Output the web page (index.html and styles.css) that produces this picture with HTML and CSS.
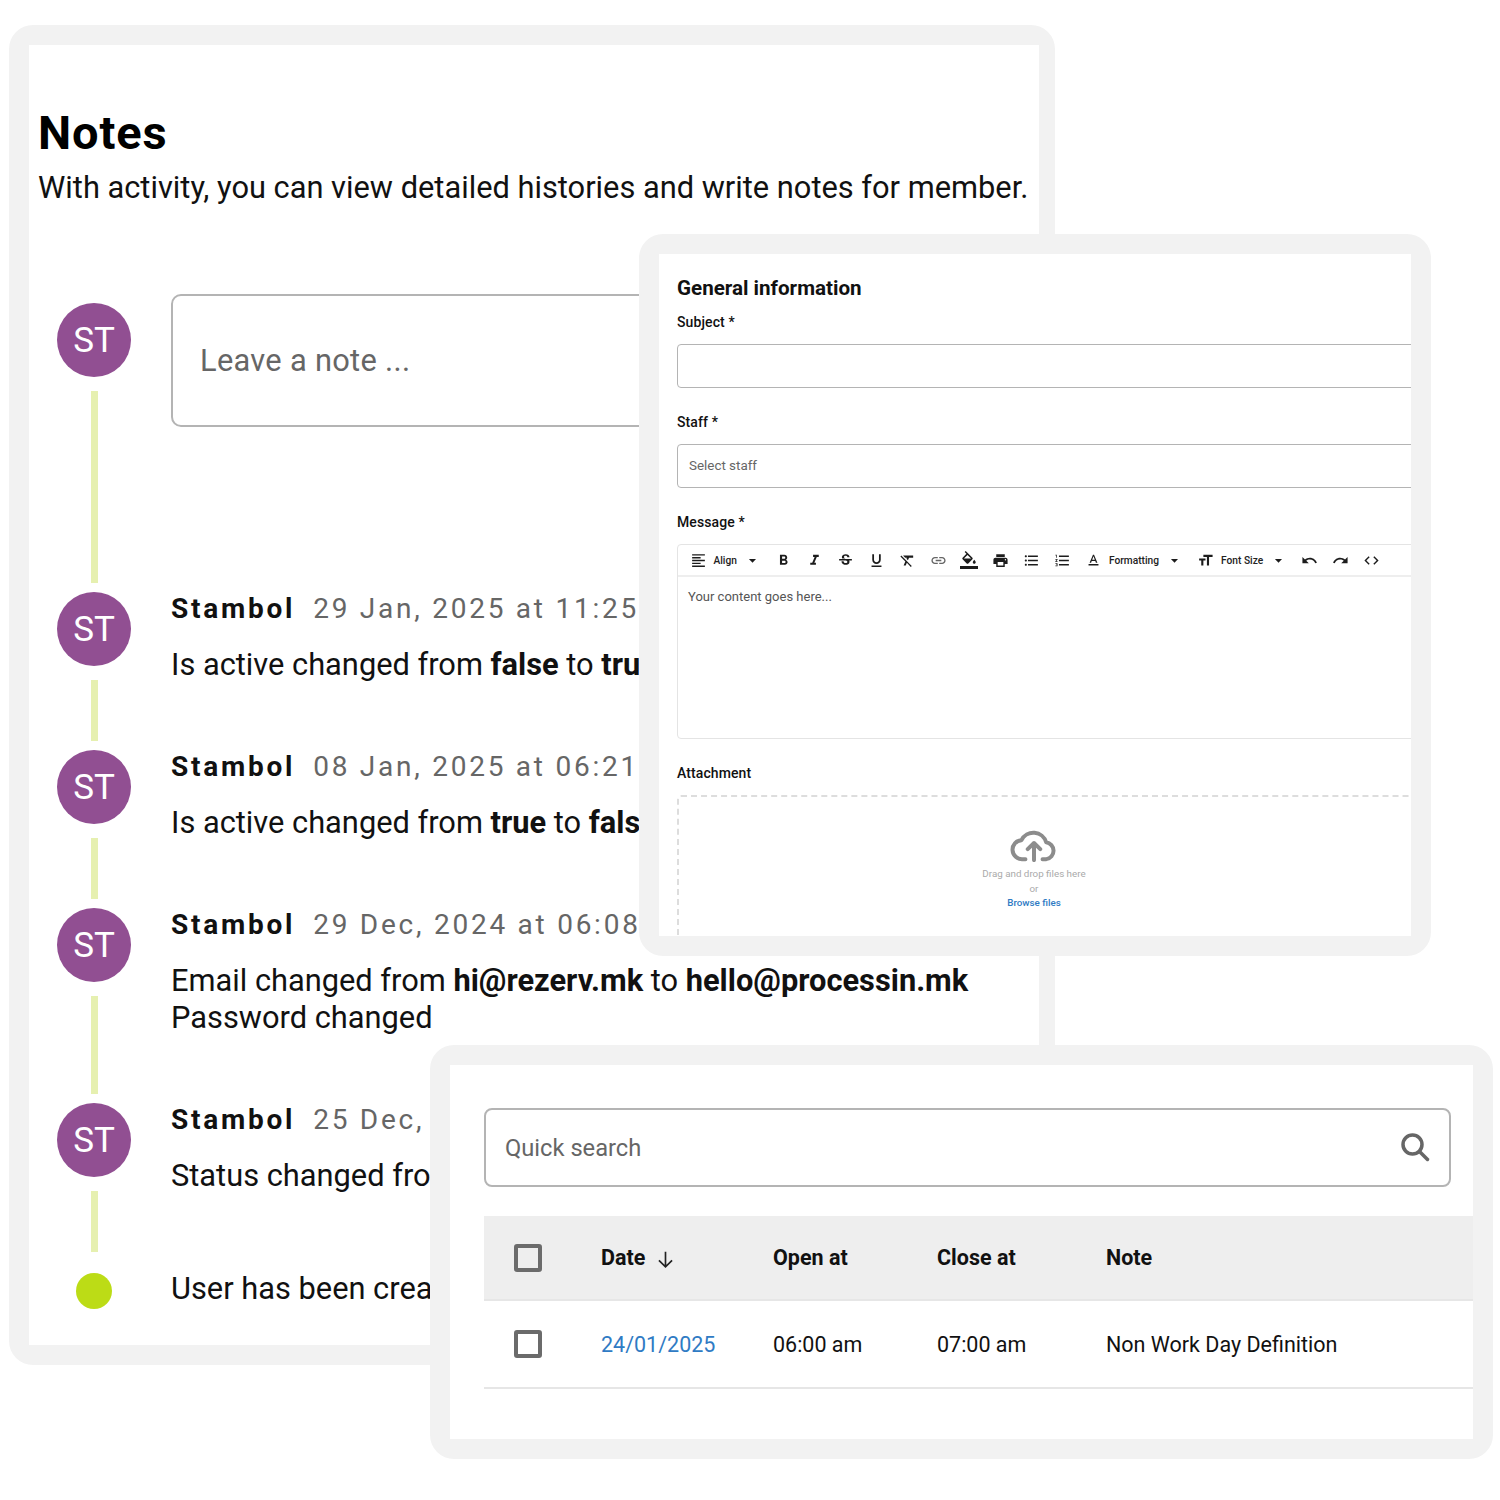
FILE: index.html
```html
<!DOCTYPE html>
<html lang="en">
<head>
  <meta charset="UTF-8" />
  <title>Notes</title>
  <link rel="stylesheet" href="styles.css">
</head>
<body>
  <!-- Notes window -->
  <section class="window window-notes">
    <div class="window-inner notes-inner">
      <h1>Notes</h1>
      <p class="lead">With activity, you can view detailed histories and write notes for member.</p>

      <div class="timeline">
        <div class="entry">
          <div class="rail">
            <div class="avatar">ST</div>
            <div class="line line-tall"></div>
          </div>
          <div class="note-box">Leave a note ...</div>
        </div>

        <div class="entry">
          <div class="rail">
            <div class="avatar">ST</div>
            <div class="line"></div>
          </div>
          <div class="entry-text">
            <div class="meta"><b>Stambol</b><span>29 Jan, 2025 at 11:25</span></div>
            <p class="body">Is active changed from <b>false</b> to <b>true</b></p>
          </div>
        </div>

        <div class="entry">
          <div class="rail">
            <div class="avatar">ST</div>
            <div class="line"></div>
          </div>
          <div class="entry-text">
            <div class="meta"><b>Stambol</b><span>08 Jan, 2025 at 06:21</span></div>
            <p class="body">Is active changed from <b>true</b> to <b>false</b></p>
          </div>
        </div>

        <div class="entry">
          <div class="rail">
            <div class="avatar">ST</div>
            <div class="line line-mid"></div>
          </div>
          <div class="entry-text">
            <div class="meta"><b>Stambol</b><span>29 Dec, 2024 at 06:08</span></div>
            <p class="body">Email changed from <b>hi@rezerv.mk</b> to <b>hello@processin.mk</b><br>Password changed</p>
          </div>
        </div>

        <div class="entry">
          <div class="rail">
            <div class="avatar">ST</div>
            <div class="line"></div>
          </div>
          <div class="entry-text">
            <div class="meta"><b>Stambol</b><span>25 Dec,</span></div>
            <p class="body">Status changed from</p>
          </div>
        </div>

        <div class="entry entry-end">
          <div class="rail"><div class="dot"></div></div>
          <p class="body end-text">User has been created</p>
        </div>
      </div>
    </div>
  </section>

  <!-- Form window -->
  <section class="window window-form">
    <div class="window-inner form-inner">
      <h2>General information</h2>
      <label class="field-label first">Subject *</label>
      <div class="field"></div>
      <label class="field-label">Staff *</label>
      <div class="field">Select staff</div>
      <label class="field-label">Message *</label>

      <div class="editor">
        <div class="toolbar">
          <span class="tool"><svg viewBox="0 0 24 24"><path d="M3 3h18v2H3zM3 7h12v2H3zM3 11h18v2H3zM3 15h12v2H3zM3 19h18v2H3z"/></svg></span>
          <span class="tool-label">Align</span>
          <span class="tool"><svg viewBox="0 0 24 24"><path d="M7 10l5 5 5-5z"/></svg></span>
          <span class="tool"><svg viewBox="0 0 24 24"><path d="M15.6 10.79c.97-.67 1.65-1.77 1.65-2.79 0-2.26-1.75-4-4-4H7v14h7.04c2.09 0 3.71-1.7 3.71-3.79 0-1.52-.86-2.82-2.15-3.42zM10 6.5h3c.83 0 1.5.67 1.5 1.5s-.67 1.5-1.5 1.5h-3v-3zm3.5 9H10v-3h3.5c.83 0 1.5.67 1.5 1.5s-.67 1.5-1.5 1.5z"/></svg></span>
          <span class="tool"><svg viewBox="0 0 24 24"><path d="M10 4v3h2.21l-3.42 8H6v3h8v-3h-2.21l3.42-8H18V4z"/></svg></span>
          <span class="tool"><svg viewBox="0 0 24 24"><path d="M6.85 7.08C6.85 4.37 9.45 3 12.24 3c1.64 0 3 .49 3.9 1.28.77.65 1.46 1.73 1.46 3.24h-3.01c0-.31-.05-.59-.15-.85-.29-.86-1.2-1.28-2.25-1.28-1.86 0-2.34 1.02-2.34 1.7 0 .48.25.88.74 1.21.38.25.77.48 1.41.7H7.39c-.21-.34-.54-.89-.54-1.92zM21 12v-2H3v2h9.62c1.15.45 1.96.75 1.96 1.97 0 1-.81 1.67-2.28 1.67-1.54 0-2.93-.54-2.93-2.51H6.4c0 .55.08 1.13.24 1.58.81 2.29 3.29 3.3 5.67 3.3 2.27 0 5.3-.89 5.3-4.05 0-.3-.01-1.16-.48-1.94H21V12z"/></svg></span>
          <span class="tool"><svg viewBox="0 0 24 24"><path d="M12 17c3.31 0 6-2.69 6-6V3h-2.5v8c0 1.93-1.57 3.5-3.5 3.5S8.5 12.93 8.5 11V3H6v8c0 3.31 2.69 6 6 6zm-7 2v2h14v-2H5z"/></svg></span>
          <span class="tool"><svg viewBox="0 0 24 24"><path d="M3.27 5L2 6.27l6.97 6.97L6.5 19h3l1.57-3.66L16.73 21 18 19.73 3.55 5.27 3.27 5zM6 5v.18L8.82 8h2.4l-.72 1.68 2.1 2.1L14.21 8H20V5H6z"/></svg></span>
          <span class="tool"><svg viewBox="0 0 24 24" class="soft"><path d="M3.9 12c0-1.71 1.39-3.1 3.1-3.1h4V7H7c-2.76 0-5 2.24-5 5s2.24 5 5 5h4v-1.9H7c-1.71 0-3.1-1.39-3.1-3.1zM8 13h8v-2H8v2zm9-6h-4v1.9h4c1.71 0 3.1 1.39 3.1 3.1s-1.39 3.1-3.1 3.1h-4V17h4c2.76 0 5-2.24 5-5s-2.24-5-5-5z"/></svg></span>
          <span class="tool"><svg viewBox="0 0 24 24" class="big"><path d="M16.56 8.94L7.62 0 6.21 1.41l2.38 2.38-5.15 5.15c-.59.59-.59 1.54 0 2.12l5.5 5.5c.29.29.68.44 1.06.44s.77-.15 1.06-.44l5.5-5.5c.59-.58.59-1.53 0-2.12zM5.21 10L10 5.21 14.79 10H5.21zM19 11.5s-2 2.17-2 3.5c0 1.1.9 2 2 2s2-.9 2-2c0-1.33-2-3.5-2-3.5zM0 20h24v4H0z"/></svg></span>
          <span class="tool"><svg viewBox="0 0 24 24"><path d="M19 8H5c-1.66 0-3 1.34-3 3v6h4v4h12v-4h4v-6c0-1.66-1.34-3-3-3zm-3 11H8v-5h8v5zm3-7c-.55 0-1-.45-1-1s.45-1 1-1 1 .45 1 1-.45 1-1 1zm-1-9H6v4h12V3z"/></svg></span>
          <span class="tool"><svg viewBox="0 0 24 24"><path d="M4 10.5c-.83 0-1.5.67-1.5 1.5s.67 1.5 1.5 1.5 1.5-.67 1.5-1.5-.67-1.5-1.5-1.5zm0-6c-.83 0-1.5.67-1.5 1.5S3.17 7.5 4 7.5 5.5 6.83 5.5 6 4.83 4.5 4 4.5zm0 12c-.83 0-1.5.68-1.5 1.5s.68 1.5 1.5 1.5 1.5-.68 1.5-1.5-.67-1.5-1.5-1.5zM7 19h14v-2H7v2zm0-6h14v-2H7v2zm0-8v2h14V5H7z"/></svg></span>
          <span class="tool"><svg viewBox="0 0 24 24"><path d="M2 17h2v.5H3v1h1v.5H2v1h3v-4H2v1zm1-9h1V4H2v1h1v3zm-1 3h1.8L2 13.1v.9h3v-1H3.2L5 10.9V10H2v1zm5-6v2h14V5H7zm0 14h14v-2H7v2zm0-6h14v-2H7v2z"/></svg></span>
          <span class="tool"><svg viewBox="0 0 24 24"><path d="M5 17v2h14v-2H5zm4.5-4.2h5l.9 2.2h2.1L12.75 4h-1.5L6.5 15h2.1l.9-2.2zM12 5.98L13.87 11h-3.74L12 5.98z"/></svg></span>
          <span class="tool-label">Formatting</span>
          <span class="tool"><svg viewBox="0 0 24 24"><path d="M7 10l5 5 5-5z"/></svg></span>
          <span class="tool"><svg viewBox="0 0 24 24"><path d="M9 4v3h5v12h3V7h5V4H9zm-6 8h3v7h3v-7h3V9H3v3z"/></svg></span>
          <span class="tool-label">Font Size</span>
          <span class="tool"><svg viewBox="0 0 24 24"><path d="M7 10l5 5 5-5z"/></svg></span>
          <span class="tool"><svg viewBox="0 0 24 24"><path d="M12.5 8c-2.65 0-5.05.99-6.9 2.6L2 7v9h9l-3.62-3.62c1.39-1.16 3.16-1.88 5.12-1.88 3.54 0 6.55 2.31 7.6 5.5l2.37-.78C21.08 11.03 17.15 8 12.5 8z"/></svg></span>
          <span class="tool"><svg viewBox="0 0 24 24"><path d="M18.4 10.6C16.55 8.99 14.15 8 11.5 8c-4.65 0-8.58 3.03-9.96 7.22L3.9 16c1.05-3.19 4.05-5.5 7.6-5.5 1.95 0 3.73.72 5.12 1.88L13 16h9V7l-3.6 3.6z"/></svg></span>
          <span class="tool"><svg viewBox="0 0 24 24"><path d="M9.4 16.6L4.8 12l4.6-4.6L8 6l-6 6 6 6 1.4-1.4zm5.2 0l4.6-4.6-4.6-4.6L16 6l6 6-6 6-1.4-1.4z"/></svg></span>
        </div>
        <div class="editor-body">Your content goes here...</div>
      </div>

      <label class="field-label">Attachment</label>
      <div class="dropzone">
        <svg class="cloud" viewBox="0 0 24 20" fill="none" stroke="#8c8c8c" stroke-width="2.1" stroke-linecap="round" stroke-linejoin="round">
          <path d="M7.5 18.5H6A5 5 0 0 1 5.4 8.5 7 7 0 0 1 18.4 9.6 4.5 4.5 0 0 1 18.5 18.5H16.500"/>
          <path d="M12 19V10M8.7 13.2 12 10l3.3 3.2"/>
        </svg>
        <div class="drop-text">Drag and drop files here</div>
        <div class="drop-text">or</div>
        <div class="drop-link">Browse files</div>
      </div>
    </div>
  </section>

  <!-- Table window -->
  <section class="window window-table">
    <div class="window-inner table-inner">
      <div class="search">
        <span>Quick search</span>
        <svg viewBox="0 0 24 24" fill="none" stroke="#666" stroke-width="2.8" stroke-linecap="round"><circle cx="10" cy="10" r="7.6"/><path d="M15.6 15.6 22 22"/></svg>
      </div>
      <div class="row row-head">
        <span class="check"></span>
        <span class="sort">Date
          <svg viewBox="0 0 24 24" fill="none" stroke="#222" stroke-width="1.9"><path d="M12 3v17M4.5 13 12 20.5 19.5 13"/></svg>
        </span>
        <span>Open at</span>
        <span>Close at</span>
        <span>Note</span>
      </div>
      <div class="row">
        <span class="check"></span>
        <a class="date-link">24/01/2025</a>
        <span>06:00 am</span>
        <span>07:00 am</span>
        <span>Non Work Day Definition</span>
      </div>
    </div>
  </section>
</body>
</html>
```

FILE: styles.css
```css
:root {
  --frame: #f2f2f2;
  --purple: #914f92;
  --lime-line: #e6f0b0;
  --lime: #bcdc16;
  --border: #b4b4b4;
  --blue: #2f7bc4;
}

* {
  box-sizing: border-box;
  margin: 0;
  padding: 0;
}

body {
  font-family: 'Roboto', sans-serif;
  background: #fff;
  color: #111;
  width: 1500px;
  height: 1500px;
  position: relative;
  overflow: hidden;
}

.window {
  position: absolute;
  padding: 20px;
  background: var(--frame);
  border-radius: 24px;
}

.window-inner {
  width: 100%;
  height: 100%;
  background: #fff;
  overflow: hidden;
}

.window-notes {
  left: 9px;
  top: 25px;
  width: 1046px;
  height: 1340px;
  padding-right: 16px;
}

.window-form {
  left: 639px;
  top: 234px;
  width: 792px;
  height: 722px;
}

.window-table {
  left: 430px;
  top: 1045px;
  width: 1063px;
  height: 414px;
}

/* notes */
.notes-inner {
  padding: 65px 0 0 9px;
}

h1 {
  font-size: 47px;
  line-height: 46px;
  font-weight: 700;
  letter-spacing: 0.9px;
  color: #000;
}

.lead {
  font-size: 30.8px;
  line-height: 36px;
  margin-top: 14px;
  white-space: nowrap;
  color: #111;
}

.timeline {
  margin: 97px 0 0 19px;
}

.entry {
  display: flex;
  gap: 40px;
  padding-bottom: 9px;
}

.rail {
  width: 74px;
  flex: none;
  display: flex;
  flex-direction: column;
  align-items: center;
}

.avatar {
  width: 74px;
  height: 74px;
  border-radius: 50%;
  background: var(--purple);
  color: #fff;
  font-size: 35px;
  line-height: 76px;
  text-align: center;
}

.line {
  width: 7px;
  height: 61px;
  margin-top: 14px;
  background: var(--lime-line);
}

.line-tall { height: 192px; }
.line-mid { height: 98px; }

.note-box {
  width: 840px;
  height: 133px;
  margin-top: -9px;
  padding: 47px 27px 0;
  border: 2px solid var(--border);
  border-radius: 10px;
  font-size: 30.8px;
  line-height: 36px;
  letter-spacing: 0.3px;
  color: #666;
}

.meta {
  font-size: 28px;
  line-height: 34px;
  letter-spacing: 2.75px;
  white-space: nowrap;
}

.meta b {
  color: #111;
  margin-right: 18px;
}

.meta span {
  color: #666;
}

.body {
  font-size: 30.8px;
  line-height: 37px;
  margin-top: 20px;
  white-space: nowrap;
}

.entry-end {
  margin-top: 12px;
  padding-bottom: 0;
  align-items: center;
}

.end-text {
  margin-top: -6px;
}

.dot {
  width: 36px;
  height: 36px;
  border-radius: 50%;
  background: var(--lime);
}

/* form */
.form-inner {
  padding: 22px 0 0 18px;
}

h2 {
  font-size: 20.6px;
  line-height: 24px;
  font-weight: 700;
  color: #111;
}

.field-label {
  display: block;
  font-size: 14px;
  line-height: 20px;
  font-weight: 500;
  letter-spacing: 0.1px;
  margin-top: 24px;
  color: #111;
}

.field-label.first {
  margin-top: 12px;
}

.field {
  height: 44px;
  margin: 12px -10px 0 0;
  padding-left: 11px;
  border: 1px solid var(--border);
  border-radius: 4px;
  font-size: 13.4px;
  line-height: 42px;
  color: #666;
}

.editor {
  margin: 12px -10px 0 0;
  height: 195px;
  border: 1px solid #e4e4e4;
  border-radius: 4px;
}

.toolbar {
  display: flex;
  align-items: center;
  height: 32px;
  padding-left: 4.5px;
  border-bottom: 2px solid #eee;
}

.tool {
  width: 31px;
  flex: none;
  display: flex;
  justify-content: center;
}

.tool svg {
  width: 17px;
  height: 17px;
  fill: #1c1c1c;
}

.tool svg.big {
  width: 18px;
  height: 18px;
}

.tool svg.soft {
  fill: #666;
}

.tool-label {
  font-size: 10.2px;
  font-weight: 500;
  color: #222;
  white-space: nowrap;
}

.editor-body {
  padding: 11px 10px;
  font-size: 13px;
  line-height: 18px;
  color: #555;
}

.dropzone {
  height: 200px;
  margin: 12px -10px 0 0;
  padding: 27px 30px 0 0;
  border: 2px dashed #ddd;
  border-radius: 4px;
  display: flex;
  flex-direction: column;
  align-items: center;
}

.cloud {
  width: 48px;
  height: 38px;
  margin-bottom: 5px;
}

.drop-text {
  font-size: 9.8px;
  line-height: 14.5px;
  color: #aaa;
}

.drop-link {
  font-size: 9.8px;
  line-height: 14.5px;
  font-weight: 500;
  color: var(--blue);
}

/* table */
.table-inner {
  padding: 43px 0 0 34px;
}

.search {
  width: 967px;
  height: 79px;
  display: flex;
  align-items: center;
  justify-content: space-between;
  padding: 0 19px;
  border: 2px solid var(--border);
  border-radius: 8px;
  font-size: 23.7px;
  color: #666;
}

.search svg {
  width: 30px;
  height: 30px;
  margin-top: -2px;
}

.row {
  display: grid;
  grid-template-columns: 87px 172px 164px 169px 1fr;
  align-items: center;
  height: 88px;
  padding-left: 30px;
  border-bottom: 2px solid #e6e6e6;
  font-size: 21.5px;
  color: #111;
}

.row-head {
  height: 85px;
  margin-top: 29px;
  background: #eee;
  font-weight: 700;
}

.check {
  width: 28px;
  height: 28px;
  border: 4px solid #6b6b6b;
  border-radius: 3px;
}

.sort {
  display: flex;
  align-items: center;
  gap: 10px;
}

.sort svg {
  width: 21px;
  height: 21px;
  margin-top: 4px;
}

.date-link {
  color: var(--blue);
}
```
